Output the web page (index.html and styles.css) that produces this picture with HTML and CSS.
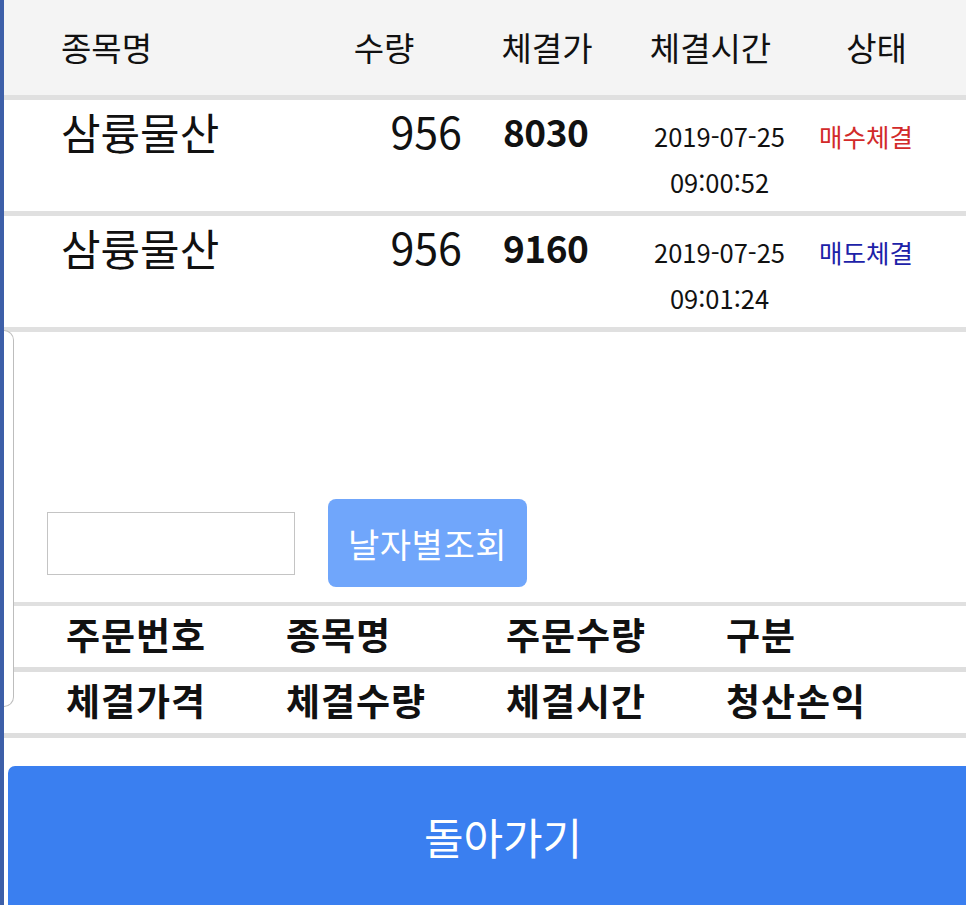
FILE: index.html
```html
<!DOCTYPE html>
<html lang="ko">
<head>
<meta charset="utf-8">
<title>체결내역</title>
<link rel="stylesheet" href="styles.css">
</head>
<body>
<div class="page">
  <div class="trades">
    <div class="trow thead">
      <div class="c c1">종목명</div>
      <div class="c c2">수량</div>
      <div class="c c3">체결가</div>
      <div class="c c4">체결시간</div>
      <div class="c c5">상태</div>
    </div>
    <div class="trow tbody">
      <div class="c c1 name">삼륭물산</div>
      <div class="c c2 qty">956</div>
      <div class="c c3 price">8030</div>
      <div class="c c4 time">2019-07-25<br>09:00:52</div>
      <div class="c c5 status buy">매수체결</div>
    </div>
    <div class="trow tbody">
      <div class="c c1 name">삼륭물산</div>
      <div class="c c2 qty">956</div>
      <div class="c c3 price">9160</div>
      <div class="c c4 time">2019-07-25<br>09:01:24</div>
      <div class="c c5 status sell">매도체결</div>
    </div>
  </div>

  <div class="search">
    <input class="date-input" type="text">
    <button class="search-btn">날자별조회</button>
  </div>

  <div class="detail">
    <div class="drow">
      <div>주문번호</div><div>종목명</div><div>주문수량</div><div>구분</div>
    </div>
    <div class="drow">
      <div>체결가격</div><div>체결수량</div><div>체결시간</div><div>청산손익</div>
    </div>
  </div>

  <button class="back-btn">돌아가기</button>

  <div class="edge-tab"></div>
</div>
</body>
</html>
```

FILE: styles.css
```css
html, body {
  margin: 0;
  padding: 0;
  background: #ffffff;
}
body {
  font-family: "Noto Sans CJK KR", "Noto Sans", sans-serif;
  color: #111111;
  border-left: 4px solid #3d5fa8;
  min-height: 905px;
  box-sizing: border-box;
  overflow: hidden;
}
.page {
  position: relative;
  height: 905px;
  overflow: hidden;
}

/* top trades table */
.trow {
  display: grid;
  grid-template-columns: 296px 170px 158px 167px 171px;
  border-bottom: 5px solid #e0e0e0;
}
.thead {
  height: 100px;
  background: #f4f4f4;
  align-items: center;
  font-size: 33px;
  line-height: 40px;
  padding-bottom: 2px;
  box-sizing: border-box;
}
.thead .c1 { padding-left: 57px; }
.thead .c2, .thead .c3, .thead .c4 { text-align: center; }
.thead .c2 { padding-right: 2px; }
.thead .c3 { padding-right: 4px; }
.thead .c4 { padding-right: 2px; }
.thead .c5 { text-align: center; padding-right: 8px; }

.tbody {
  height: 111px;
  align-items: start;
}
.tbody .c { line-height: 46px; }
.name {
  font-size: 43px;
  padding-left: 57px;
  padding-top: 8px;
}
.qty {
  font-size: 43px;
  text-align: right;
  padding-right: 8px;
  padding-top: 7px;
}
.price {
  font-size: 37px;
  font-weight: 700;
  padding-left: 33px;
  padding-top: 8px;
  letter-spacing: -0.5px;
}
.time {
  font-size: 25.5px;
  text-align: center;
  padding-left: 16px;
  padding-top: 13px;
}
.status {
  font-size: 25.5px;
  padding-left: 24px;
  padding-top: 13px;
}
.buy { color: #d22a2a; }
.sell { color: #1c22a8; }

/* search */
.search {
  display: flex;
  align-items: center;
  gap: 33px;
  padding-left: 43px;
  margin-top: 167px;
  height: 88px;
}
.date-input {
  width: 248px;
  height: 63px;
  box-sizing: border-box;
  border: 1px solid #c4c4c4;
  margin: 0;
  padding: 0;
  background: #fff;
}
.search-btn {
  width: 199px;
  height: 88px;
  border: none;
  border-radius: 8px;
  background: #70a6fb;
  color: #ffffff;
  font-family: "Noto Sans CJK KR", "Noto Sans", sans-serif;
  font-size: 34px;
  letter-spacing: 0.5px;
  padding: 0;
}

/* detail header rows */
.detail {
  margin-top: 15px;
  border-top: 4px solid #e0e0e0;
}
.drow {
  display: grid;
  grid-template-columns: 220px 220px 220px 220px;
  padding-left: 62px;
  padding-bottom: 5px;
  box-sizing: border-box;
  height: 66px;
  align-items: center;
  border-bottom: 5px solid #dedede;
  font-size: 37px;
  font-weight: 700;
  letter-spacing: 1px;
  line-height: 40px;
}

/* back button */
.back-btn {
  display: block;
  margin-top: 28px;
  margin-left: 4px;
  width: 990px;
  height: 160px;
  border: none;
  border-radius: 7px 0 0 0;
  background: #3a7ff0;
  color: #ffffff;
  font-family: "Noto Sans CJK KR", "Noto Sans", sans-serif;
  font-size: 43px;
  padding: 0 0 20px 0;
  text-align: center;
}

/* overlay edge tab on the left */
.edge-tab {
  position: absolute;
  left: 0;
  top: 330px;
  width: 9px;
  height: 375px;
  background: #ffffff;
  border: 1.5px solid #bdbdbd;
  border-left: none;
  border-radius: 0 10px 10px 0;
}
```
